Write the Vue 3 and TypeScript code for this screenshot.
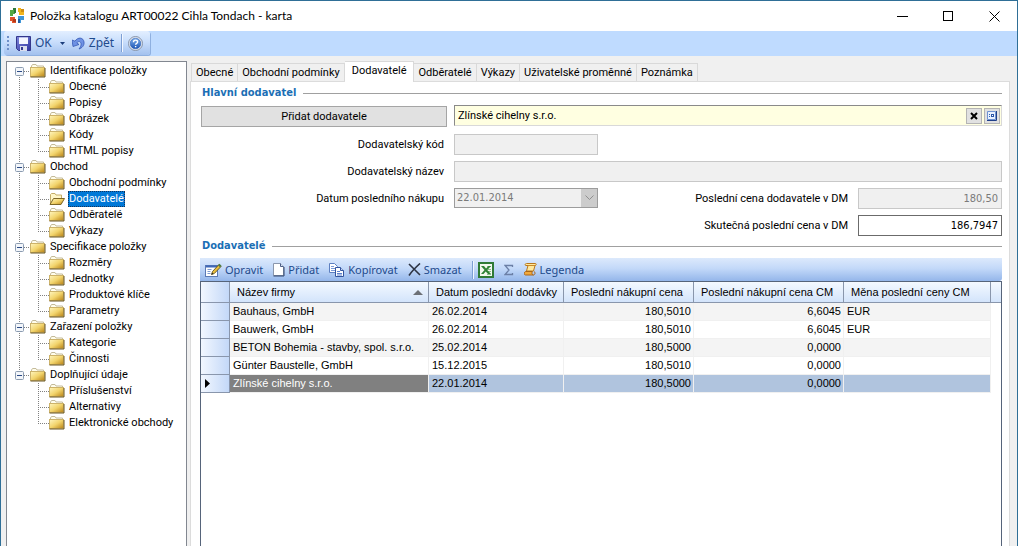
<script setup lang="ts">
import { ref } from 'vue'

interface TreeGroup {
  label: string
  open: boolean
  children: string[]
}

interface Supplier {
  name: string
  date: string
  price: string
  priceCm: string
  currency: string
}

const groups = ref<TreeGroup[]>([
  { label: 'Identifikace položky', open: true, children: ['Obecné', 'Popisy', 'Obrázek', 'Kódy', 'HTML popisy'] },
  { label: 'Obchod', open: true, children: ['Obchodní podmínky', 'Dodavatelé', 'Odběratelé', 'Výkazy'] },
  { label: 'Specifikace položky', open: true, children: ['Rozměry', 'Jednotky', 'Produktové klíče', 'Parametry'] },
  { label: 'Zařazení položky', open: true, children: ['Kategorie', 'Činnosti'] },
  { label: 'Doplňující údaje', open: true, children: ['Příslušenství', 'Alternativy', 'Elektronické obchody'] },
])

const tabs: string[] = ['Obecné', 'Obchodní podmínky', 'Dodavatelé', 'Odběratelé', 'Výkazy', 'Uživatelské proměnné', 'Poznámka']
const active = ref('Dodavatelé')

const supplier = ref('Zlínské cihelny s.r.o.')
const actualPrice = ref('186,7947')

const rows: Supplier[] = [
  { name: 'Bauhaus, GmbH', date: '26.02.2014', price: '180,5010', priceCm: '6,6045', currency: 'EUR' },
  { name: 'Bauwerk, GmbH', date: '26.02.2014', price: '180,5010', priceCm: '6,6045', currency: 'EUR' },
  { name: 'BETON Bohemia - stavby, spol. s.r.o.', date: '25.02.2014', price: '180,5000', priceCm: '0,0000', currency: '' },
  { name: 'Günter Baustelle, GmbH', date: '15.12.2015', price: '180,5010', priceCm: '0,0000', currency: '' },
  { name: 'Zlínské cihelny s.r.o.', date: '22.01.2014', price: '180,5000', priceCm: '0,0000', currency: '' },
]
const selectedRow = ref(4)
</script>

<template>
  <div class="window">
    <svg class="defs" width="0" height="0" aria-hidden="true">
      <defs>
        <linearGradient id="gold" x1="0" y1="0" x2="1" y2="1">
          <stop offset="0" stop-color="#fff6c0" />
          <stop offset="0.5" stop-color="#f2d46c" />
          <stop offset="1" stop-color="#b98317" />
        </linearGradient>
        <linearGradient id="disk" x1="0" y1="0" x2="1" y2="1">
          <stop offset="0" stop-color="#7f86dc" />
          <stop offset="1" stop-color="#3036a0" />
        </linearGradient>
        <linearGradient id="orb" x1="0" y1="0" x2="0" y2="1">
          <stop offset="0" stop-color="#7fb0ee" />
          <stop offset="1" stop-color="#1c55b4" />
        </linearGradient>
      </defs>
      <symbol id="folder" viewBox="0 0 16 14">
        <path d="M1.500 4V2l1-1.500h3.500l1 1.500h6.500v2" fill="#fffdec" stroke="#c4bb9a" />
        <rect x=".5" y="3.500" width="14" height="9" fill="url(#gold)" stroke="#cdb36a" />
        <path d="M.500 13h14.500V4" fill="none" stroke="#6b5622" />
      </symbol>
      <symbol id="folder-open" viewBox="0 0 16 14">
        <path d="M1.500 12V2.500L2.500 1.500h3.500l1 1.500h5.500V6" fill="#fff6c8" stroke="#c4ad68" />
        <path d="M1 12.500 4.500 6.500H15.500L12 12.500Z" fill="url(#gold)" stroke="#7d6726" />
      </symbol>
    </svg>

    <header class="titlebar">
      <svg class="logo" width="16" height="16" viewBox="0 0 16 16" aria-hidden="true">
        <path d="M1 2h5v4H4v2H1Z" fill="#55a843" />
        <path d="M4 0h3v5H5V2H4Z" fill="#2e7a3a" />
        <path d="M9 0h3v2h3v5h-5V4H9Z" fill="#f2b51d" />
        <path d="M12 1h3v3h-3Z" fill="#cf8d12" />
        <path d="M1 9h5v3h1v3H3v-2H1Z" fill="#e2542b" />
        <path d="M4 11h3v3H4Z" fill="#b43a1b" />
        <path d="M9 8h6v4h-3v3H9Z" fill="#3f96d8" />
        <path d="M9 11h2v4H9Z" fill="#1d5fa5" />
      </svg>
      <h1>Položka katalogu ART00022 Cihla Tondach - karta</h1>
      <div class="win-buttons">
        <button type="button" aria-label="Minimalizovat">
          <svg width="11" height="11" viewBox="0 0 11 11"><path d="M0 5.500h11" stroke="#000" /></svg>
        </button>
        <button type="button" aria-label="Maximalizovat">
          <svg width="11" height="11" viewBox="0 0 11 11"><rect x=".5" y=".5" width="9" height="9" fill="none" stroke="#000" /></svg>
        </button>
        <button type="button" aria-label="Zavřít">
          <svg width="11" height="11" viewBox="0 0 11 11"><path d="M.5.5l10 10M10.500.5l-10 10" stroke="#000" /></svg>
        </button>
      </div>
    </header>

    <div class="menu-row">
      <div class="main-tools" role="toolbar">
        <span class="grip" aria-hidden="true"></span>
        <button type="button" class="tool">
          <svg width="15" height="15" viewBox="0 0 15 15" aria-hidden="true">
            <path d="M.5.5h14v14H2.500l-2-2Z" fill="url(#disk)" stroke="#34388c" />
            <rect x="3" y="1" width="9" height="7" fill="#f4f6ff" />
            <path d="M3 1.500h9" stroke="#b9c0ea" />
            <rect x="4" y="10" width="7" height="5" fill="#d9ddee" />
            <rect x="5" y="11" width="2" height="3" fill="#33388f" />
          </svg>
          OK
        </button>
        <button type="button" class="tool drop" aria-label="Další možnosti">
          <svg width="5" height="3" viewBox="0 0 5 3"><path d="M0 0h5L2.500 3Z" fill="#1b3d7c" /></svg>
        </button>
        <button type="button" class="tool">
          <svg width="13" height="14" viewBox="0 0 13 14" aria-hidden="true">
            <path d="M0 4 1 10.500 7 8.500 4.800 7C6 5 8.500 5 9 7.500c.4 2-.5 3.500-2 5.500 3-1 5.500-3.500 5-7C11.500 1.500 6 .5 3 5.200Z" fill="#6f92e4" stroke="#3558b4" stroke-width=".8" />
          </svg>
          Zpět
        </button>
        <span class="sep" aria-hidden="true"></span>
        <button type="button" class="tool" aria-label="Nápověda">
          <svg width="15" height="15" viewBox="0 0 15 15">
            <circle cx="7.500" cy="7.500" r="7" fill="#e9eef7" stroke="#8592a8" />
            <circle cx="7.500" cy="7.500" r="5.300" fill="url(#orb)" stroke="#2a5cb0" stroke-width=".6" />
            <path d="M5.500 6.200c0-2.800 4.200-2.600 4.100-.3 0 1.400-2 1.500-2 2.900M7.600 9.900v1.400" fill="none" stroke="#fff" stroke-width="1.400" />
          </svg>
        </button>
      </div>
    </div>

    <div class="body">
      <nav class="tree-panel">
        <ul class="tree">
          <li v-for="g in groups" :key="g.label" class="group">
            <div class="node">
              <button type="button" class="expander" :aria-label="g.label" :aria-expanded="g.open" @click="g.open = !g.open">
                <svg width="9" height="9" viewBox="0 0 9 9">
                  <rect x=".5" y=".5" width="8" height="8" rx="1" fill="#f3f6fa" stroke="#8b9bb0" />
                  <path d="M2 4.500h5" stroke="#2b4a86" />
                  <path v-if="!g.open" d="M4.500 2v5" stroke="#2b4a86" />
                </svg>
              </button>
              <span class="dots"></span>
              <svg class="folder" width="16" height="14" aria-hidden="true"><use href="#folder" /></svg>
              <span class="label">{{ g.label }}</span>
            </div>
            <ul v-if="g.open" class="children">
              <li v-for="c in g.children" :key="c" class="leaf">
                <span class="dots"></span>
                <svg class="folder" width="16" height="14" aria-hidden="true">
                  <use :href="c === active && g.label === 'Obchod' ? '#folder-open' : '#folder'" />
                </svg>
                <a href="#" class="label" :class="{ current: c === active && g.label === 'Obchod' }" @click.prevent>{{ c }}</a>
              </li>
            </ul>
          </li>
        </ul>
      </nav>

      <main class="content">
        <div class="tabs" role="tablist">
          <button v-for="t in tabs" :key="t" type="button" role="tab" class="tab" :class="{ selected: t === active }" :aria-selected="t === active">{{ t }}</button>
        </div>

        <section class="page">
          <h2 class="heading">Hlavní dodavatel</h2>
          <form class="form" @submit.prevent>
            <button type="button" class="add">Přidat dodavatele</button>
            <div class="lookup">
              <input v-model="supplier" type="text" aria-label="Hlavní dodavatel" />
              <button type="button" aria-label="Vymazat">
                <svg width="8" height="8" viewBox="0 0 8 8"><path d="M1 1l6 6M7 1 1 7" stroke="#000" stroke-width="2" /></svg>
              </button>
              <button type="button" aria-label="Vybrat">
                <svg width="10" height="10" viewBox="0 0 10 10">
                  <path d="M.5.5h8v8h-8Z" fill="#e8f1ff" stroke="#6f93d2" />
                  <path d="M0 9.500h9.500V0" fill="none" stroke="#1f3f88" />
                  <path d="M2 3.500h1M2 5.500h1" stroke="#3565b8" />
                  <rect x="4.500" y="3.500" width="2" height="2" fill="#fff" stroke="#2a55a8" />
                </svg>
              </button>
            </div>

            <label for="code">Dodavatelský kód</label>
            <input id="code" class="box off" type="text" disabled />

            <label for="supplier-name" class="first">Dodavatelský název</label>
            <input id="supplier-name" class="box off wide" type="text" disabled />

            <label for="last-date">Datum posledního nákupu</label>
            <div class="date">
              <select id="last-date" disabled>
                <option>22.01.2014</option>
              </select>
              <span class="arrow" aria-hidden="true">
                <svg width="9" height="6" viewBox="0 0 9 6"><path d="M.5.5l4 4 4-4" fill="none" stroke="#8f8f8f" /></svg>
              </span>
            </div>
            <label for="last-price">Poslední cena dodavatele v DM</label>
            <input id="last-price" class="box off num" type="text" value="180,50" disabled />

            <label for="actual-price" class="third">Skutečná poslední cena v DM</label>
            <input id="actual-price" v-model="actualPrice" class="box num" type="text" />
          </form>

          <h2 class="heading second">Dodavatelé</h2>
          <div class="grid-tools" role="toolbar">
            <button type="button" class="tool">
              <svg width="17" height="14" viewBox="0 0 17 14" aria-hidden="true">
                <rect x=".5" y="2.500" width="12" height="11" fill="#fff" stroke="#5b79b4" />
                <path d="M1 3.500h11" stroke="#3f68b8" stroke-width="2" />
                <path d="M2.500 6.500h4M2.500 8.500h3M2.500 10.500h3" stroke="#7d9ad0" />
                <path d="M6.500 11.500 7.500 8.500 14 1.500l2 2-6.700 7Z" fill="#e9bd3c" stroke="#5a5124" stroke-width=".9" />
                <path d="M6.500 11.500l.6-1.800 1.300 1.200Z" fill="#222" />
                <path d="M13 2.500l1.500-1.700 2 1.900L15 4.300Z" fill="#4d7c3f" />
              </svg>
              Opravit
            </button>
            <button type="button" class="tool">
              <svg width="12" height="14" viewBox="0 0 12 14" aria-hidden="true">
                <path d="M.5.5h7l3 3v9H.5Z" fill="#fff" stroke="#8a96ac" />
                <path d="M7.500.5v3h3" fill="#d8e2f2" stroke="#4c5f88" />
                <path d="M.5 13h10.500V4" fill="none" stroke="#33466e" />
              </svg>
              Přidat
            </button>
            <button type="button" class="tool">
              <svg width="16" height="14" viewBox="0 0 16 14" aria-hidden="true">
                <path d="M.5.5h5l3 3v6h-8Z" fill="#fff" stroke="#5d7fc0" />
                <path d="M2 3.500h3M2 5.500h4M2 7.500h4" stroke="#7c9bd8" />
                <path d="M6.500 4.500h5l3 3v6h-8Z" fill="#fff" stroke="#33559e" />
                <path d="M11.500 4.500v3h3" fill="#c8d8f4" stroke="#33559e" />
                <path d="M8 8.500h3M8 10.500h5M8 12h5" stroke="#5c80cc" />
              </svg>
              Kopírovat
            </button>
            <button type="button" class="tool">
              <svg width="13" height="13" viewBox="0 0 13 13" aria-hidden="true">
                <path d="M1 1c3 3 7 7 11 11M12 .5C7 5 4 8 1 12.500" fill="none" stroke="#2d3444" stroke-width="1.600" />
              </svg>
              Smazat
            </button>
            <span class="sep" aria-hidden="true"></span>
            <button type="button" class="tool" aria-label="Export do Excelu">
              <svg width="16" height="16" viewBox="0 0 16 16">
                <rect x="1" y="1" width="14" height="14" fill="#f2f8ef" stroke="#2f7a36" stroke-width="2" />
                <path d="M9 4.500h4M10 7.500h3M10 9.500h3M9 12.500h4" stroke="#8abf88" />
                <path d="M3 4h3l2 2.600L10.500 4H13L9.300 8l3.700 4h-3L7.700 9.400 5.500 12H3l3.500-4Z" fill="#2f8236" />
              </svg>
            </button>
            <button type="button" class="tool sigma" aria-label="Součty">
              <svg width="10" height="12" viewBox="0 0 10 12">
                <path d="M8.500 3V1.500H1l4 4.500-4 4.500h7.500V9" fill="none" stroke="#6b7fa6" stroke-width="1.300" />
              </svg>
            </button>
            <button type="button" class="tool">
              <svg width="13" height="13" viewBox="0 0 13 13" aria-hidden="true">
                <path d="M2.500.5h9c1 0 1 2-.5 2L9.500 8h-7l1.500-5.500H2C.500 2.500 1 .500 2.500.5Z" fill="#ffe9a0" stroke="#b9781e" />
                <path d="M4 2.500h7" stroke="#c98a28" />
                <path d="M1.500 8.500h7c-1 1.500-.5 3.500 1 3.500h-8C-.200 12 0 9 1.500 8.500Z" fill="#f2a93c" stroke="#a9661a" />
                <path d="M9.500 12c2-.5 2-3 .5-3.500" fill="none" stroke="#a9661a" />
              </svg>
              Legenda
            </button>
          </div>

          <div class="grid">
            <table>
              <colgroup>
                <col class="c-mark" /><col class="c-name" /><col class="c-date" /><col class="c-price" /><col class="c-cm" /><col class="c-cur" /><col />
              </colgroup>
              <thead>
                <tr>
                  <th></th>
                  <th scope="col">
                    <span class="sorted">Název firmy
                      <svg width="10" height="5" viewBox="0 0 10 5" aria-hidden="true"><path d="M5 0l5 5H0Z" fill="#6c7076" /></svg>
                    </span>
                  </th>
                  <th scope="col">Datum poslední dodávky</th>
                  <th scope="col">Poslední nákupní cena</th>
                  <th scope="col">Poslední nákupní cena CM</th>
                  <th scope="col">Měna poslední ceny CM</th>
                  <th></th>
                </tr>
              </thead>
              <tbody>
                <tr v-for="(r, i) in rows" :key="r.name" :class="{ picked: i === selectedRow }" @click="selectedRow = i">
                  <td class="mark">
                    <svg v-if="i === selectedRow" width="5" height="9" viewBox="0 0 5 9" aria-hidden="true"><path d="M0 0l5 4.500L0 9Z" fill="#000" /></svg>
                  </td>
                  <td class="name">{{ r.name }}</td>
                  <td>{{ r.date }}</td>
                  <td class="right">{{ r.price }}</td>
                  <td class="right">{{ r.priceCm }}</td>
                  <td>{{ r.currency }}</td>
                  <td class="rest"></td>
                </tr>
              </tbody>
            </table>
          </div>
        </section>
      </main>
    </div>
  </div>
</template>

<style>
body {
  margin: 0;
}
</style>

<style scoped>
.window {
  box-sizing: border-box;
  display: flex;
  flex-direction: column;
  min-height: 100vh;
  border: 1px solid #2f6f97;
  border-bottom: 0;
  background: #f0f0f0;
  color: #000;
  font: 11px/16px Roboto, 'DejaVu Sans Condensed', sans-serif;
}
.defs {
  position: absolute;
}
svg {
  display: block;
  flex: none;
}
button,
input,
select {
  font: inherit;
  color: inherit;
  box-sizing: border-box;
  margin: 0;
  padding: 0;
  border: 0;
  border-radius: 0;
  background: none;
}
h1,
h2,
ul {
  margin: 0;
  padding: 0;
  list-style: none;
}

.titlebar {
  display: flex;
  align-items: center;
  height: 30px;
  padding: 0 12px 0 8px;
  background: #fff;
}
.titlebar h1 {
  flex: 1;
  margin-left: 5px;
  font: 12px/16px Lato, 'Open Sans', sans-serif;
}
.win-buttons {
  display: flex;
}
.win-buttons button {
  display: grid;
  place-items: center;
  width: 46px;
  height: 28px;
}
.win-buttons button:last-child {
  width: 22px;
  margin-left: 12px;
}

.menu-row {
  display: flex;
  height: 25px;
  background: #bfdbff;
}
.main-tools {
  display: flex;
  align-items: center;
  margin: 0 0 1px 3px;
  padding: 0 7px 0 3px;
  border-radius: 3px;
  background: linear-gradient(#e3efff, #c9defc 45%, #a3c1ee);
  box-shadow: 1px 1px 0 #8fb0e0;
}
.grip {
  width: 2px;
  height: 14px;
  margin-right: 7px;
  background: repeating-linear-gradient(#6d8fc8 0 2px, transparent 2px 4px);
}
.tool {
  display: flex;
  align-items: center;
  gap: 3px;
  color: #1e4a8c;
  font: 11px/16px 'Noto Sans', 'Open Sans', sans-serif;
}
.main-tools .tool {
  gap: 4px;
  font-size: 12px;
}
.main-tools .drop {
  margin: 0 7px 0 8px;
}
.sep {
  width: 1px;
  height: 18px;
  margin: 0 6px 0 7px;
  background: #7d9fd4;
  box-shadow: 1px 0 0 #f2f7ff;
}

.body {
  display: flex;
  flex: 1;
  gap: 3px;
  padding: 5px 7px 0 5px;
}
.tree-panel {
  box-sizing: border-box;
  flex: none;
  width: 181px;
  border: 1px solid #828790;
  border-bottom: 0;
  background: #fff;
}
.tree {
  padding: 1px 0 0 8px;
}
.group {
  background: repeating-linear-gradient(#808080 0 1px, transparent 1px 2px) 4px 0 / 1px 100% no-repeat;
}
.group:first-child {
  background-position: 4px 8px;
}
.group:last-child {
  background-size: 1px 8px;
}
.node,
.leaf {
  display: flex;
  align-items: center;
  height: 16px;
}
.expander {
  width: 9px;
  height: 9px;
}
.dots {
  width: 6px;
  height: 1px;
  background: repeating-linear-gradient(90deg, #808080 0 1px, transparent 1px 2px);
}
.label {
  margin-left: 4px;
  color: #000;
  line-height: 18px;
  text-decoration: none;
  white-space: nowrap;
}
.children {
  padding-left: 23px;
}
.leaf {
  background: repeating-linear-gradient(#808080 0 1px, transparent 1px 2px) 0 0 / 1px 100% no-repeat;
}
.leaf:last-child {
  background-size: 1px 8px;
}
.leaf .dots {
  width: 11px;
}
.current {
  box-sizing: border-box;
  height: 16px;
  margin-left: 3px;
  padding: 0 1px;
  line-height: 16px;
  background: #0078d7;
  color: #fff;
  outline: 1px dotted #15355c;
  outline-offset: -1px;
}

.content {
  display: flex;
  flex: 1;
  flex-direction: column;
  min-width: 0;
}
.tabs {
  display: flex;
  align-items: flex-end;
  height: 20px;
  padding-left: 1px;
}
.tab {
  height: 18px;
  padding: 0 4px;
  border: 1px solid #d9d9d9;
  border-width: 1px 1px 0 0;
  line-height: 16px;
  white-space: nowrap;
}
.tab:first-child {
  border-left-width: 1px;
}
.tab.selected {
  z-index: 1;
  height: 21px;
  margin: 0 0 -1px;
  padding: 0 7px 3px;
  background: #fff;
}
.page {
  display: flex;
  flex: 1;
  flex-direction: column;
  padding: 3px 7px 0 9px;
  border: 1px solid #dcdcdc;
  border-bottom: 0;
  background: #fff;
}
.heading {
  display: flex;
  align-items: center;
  gap: 7px;
  padding-left: 2px;
  color: #1b6fb5;
  font: bold 11px/16px 'DejaVu Sans Condensed', 'DejaVu Sans', sans-serif;
}
.heading::after {
  flex: 1;
  height: 1px;
  background: #a0a0a0;
  content: '';
}
.heading.second {
  margin-top: 2px;
}

.form {
  display: grid;
  grid-template-columns: 246px 144px 1fr 144px;
  grid-template-rows: 23px;
  grid-auto-rows: 21px;
  gap: 6px 7px;
  align-items: center;
  margin: 4px 0 0 1px;
}
.add {
  height: 21px;
  border: 1px solid #a5a5a5;
  background: #e1e1e1;
}
.form label {
  padding-right: 3px;
  text-align: right;
}
.first {
  grid-column: 1;
}
.third {
  grid-column: 3;
}
.lookup {
  display: flex;
  box-sizing: border-box;
  grid-column: 2 / 5;
  align-self: start;
  align-items: center;
  gap: 2px;
  height: 21px;
  padding-right: 1px;
  border: 1px solid #d9d9d9;
  border-top-color: #8a8a8a;
  border-left-color: #8a8a8a;
  background: #ffffe1;
}
.lookup input {
  flex: 1;
  min-width: 0;
  height: 16px;
  padding-left: 3px;
}
.lookup button {
  display: grid;
  place-items: center;
  width: 16px;
  height: 16px;
  border: 1px solid #b4b4b4;
  background: #e1e1e1;
}
.box {
  width: 100%;
  height: 21px;
  padding: 0 3px;
  border: 1px solid #6b6b6b;
  background: #fff;
}
.off {
  border-color: #c8c8c8;
  background: #f0f0f0;
  color: #7a7a7a;
}
.wide {
  grid-column: 2 / 5;
}
.num,
.date select {
  font-family: 'DejaVu Sans Condensed', 'DejaVu Sans', sans-serif;
}
.num {
  text-align: right;
}
.date {
  display: grid;
  align-self: start;
}
.date select {
  grid-area: 1 / 1;
  width: 100%;
  height: 20px;
  padding-left: 2px;
  border: 1px solid #9c9c9c;
  background: #f0f0f0;
  color: #7a7a7a;
  opacity: 1;
  appearance: none;
}
.arrow {
  display: grid;
  grid-area: 1 / 1;
  place-items: center;
  justify-self: end;
  width: 16px;
  height: 18px;
  margin: 1px;
  background: #cccccc;
  pointer-events: none;
}

.grid-tools {
  display: flex;
  align-items: center;
  height: 23px;
  margin-top: 4px;
  padding-left: 5px;
  border-radius: 0 0 3px 0;
  background: linear-gradient(#dce9fc, #c3d9f9 45%, #94b6ea);
}
.grid-tools .tool {
  margin-right: 10px;
}
.grid-tools .sep {
  margin: 0 5px 0 0;
}

.grid {
  flex: 1;
  border: 1px solid #56647a;
  border-bottom: 0;
  background: #fff;
  font: 11px/17px 'Liberation Sans', Arial, sans-serif;
}
table {
  width: 100%;
  border-collapse: separate;
  border-spacing: 0;
  table-layout: fixed;
}
.c-mark { width: 29px; }
.c-name { width: 199px; }
.c-date { width: 135px; }
.c-price { width: 130px; }
.c-cm { width: 150px; }
.c-cur { width: 147px; }
th {
  box-sizing: border-box;
  height: 21px;
  padding: 0 0 0 7px;
  border-right: 1px solid #8996ac;
  border-bottom: 1px solid #8996ac;
  background: linear-gradient(#f4f9ff, #d3e4fb);
  font-weight: normal;
  text-align: left;
  white-space: nowrap;
}
th:first-child {
  background: linear-gradient(90deg, #f2f7ff, #c3d8f8);
}
th:last-child {
  border-right: 0;
}
.sorted {
  display: flex;
  align-items: center;
  justify-content: space-between;
  padding-right: 5px;
}
td {
  box-sizing: border-box;
  height: 18px;
  padding: 0 2px 0 3px;
  border-right: 1px solid #f0f0f0;
  border-bottom: 1px solid #f0f0f0;
  white-space: nowrap;
}
tbody tr:nth-child(odd) td {
  background: #f4f4f4;
}
tbody tr td.mark {
  padding: 0 0 0 4px;
  border-right: 1px solid #8996ac;
  border-bottom: 1px solid #8996ac;
  background: linear-gradient(90deg, #f2f7ff, #c3d8f8);
}
tbody tr td.rest {
  border: 0;
  background: #fff;
}
.right {
  text-align: right;
}
tbody tr.picked td:not(.mark):not(.rest) {
  background: #b0c4de;
}
tbody tr.picked td.name:not(.mark) {
  background: #808080;
  color: #fff;
}
</style>
